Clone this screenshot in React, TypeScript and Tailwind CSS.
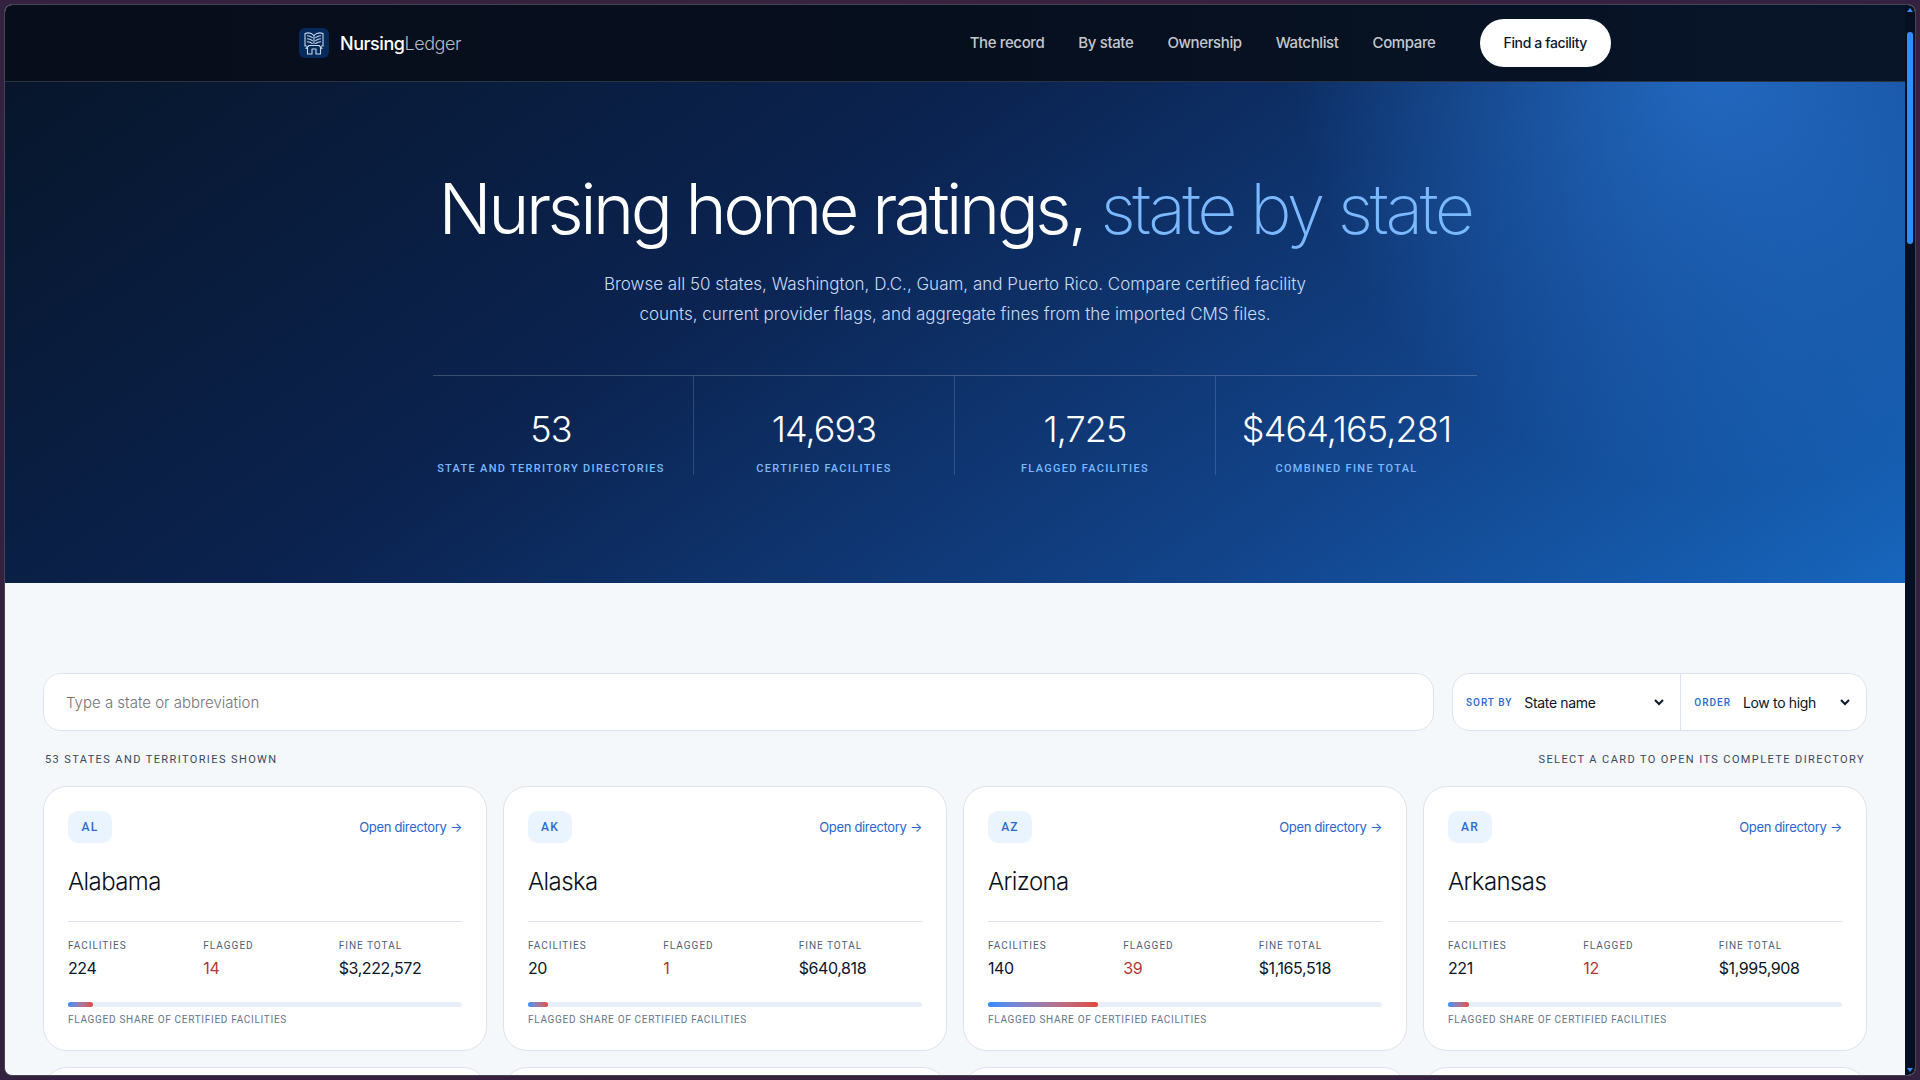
import React, { useState } from 'react';

interface StateRecord {
  code: string;
  name: string;
  facilities: number;
  flagged: number;
  fines: number;
}

const STATES: StateRecord[] = [
  { code: 'AL', name: 'Alabama', facilities: 224, flagged: 14, fines: 3222572 },
  { code: 'AK', name: 'Alaska', facilities: 20, flagged: 1, fines: 640818 },
  { code: 'AZ', name: 'Arizona', facilities: 140, flagged: 39, fines: 1165518 },
  { code: 'AR', name: 'Arkansas', facilities: 221, flagged: 12, fines: 1995908 },
];

const NAV_LINKS = ['The record', 'By state', 'Ownership', 'Watchlist', 'Compare'];

const STATS = [
  { value: '53', label: 'State and territory directories' },
  { value: '14,693', label: 'Certified facilities' },
  { value: '1,725', label: 'Flagged facilities' },
  { value: '$464,165,281', label: 'Combined fine total' },
];

// --- Subcomponents ---

const LogoMark: React.FC = () => (
  <span className="flex size-[30px] items-center justify-center rounded-md bg-[#062a5c]">
    <svg width="22" height="24" viewBox="0 0 22 24" fill="none" stroke="#c9d6e8" strokeWidth="1.1" strokeLinejoin="round" strokeLinecap="round" aria-hidden="true">
      <path d="M3.500 15H2V2.500C5 1.400 8.500 1.800 11 4.500C13.500 1.800 17 1.400 20 2.500V15H18.500" />
      <path d="M11 4.500V12.500" />
      <path d="M4.500 4.800C6.500 4.800 8 5.500 9.300 6.700M4.500 7.800C6.500 7.800 8 8.500 9.300 9.700M4.500 10.800C6.500 10.800 8 11.500 9.300 12.500" />
      <path d="M17.500 4.800C15.500 4.800 14 5.500 12.700 6.700M17.500 7.800C15.500 7.800 14 8.500 12.700 9.700M17.500 10.800C15.500 10.800 14 11.500 12.700 12.500" />
      <path d="M3 17.500L6 14.500H16L19 17.500M4.500 17V23H9V18H13V23H17.500V17" />
    </svg>
  </span>
);

const Header: React.FC = () => (
  <header className="border-b border-[#2c3340] bg-linear-to-r from-[#080d1b] via-[#060f1e] to-[#081529]">
    <div className="mx-auto flex h-[76px] max-w-[1312px] items-center justify-between">
      <a href="#home" className="flex items-center gap-[11px] text-lg leading-6 tracking-tight text-[#b4bac6]">
        <LogoMark />
        <span className="pt-0.5"><span className="font-medium text-white">Nursing</span><span className="font-light">Ledger</span></span>
      </a>
      <nav className="flex items-center gap-[34px] text-[15px] font-medium tracking-tight text-[#c3c8cf]">
        {NAV_LINKS.map((link) => (
          <a key={link} href="#section">{link}</a>
        ))}
        <a href="#find" className="ml-2.5 flex h-12 items-center rounded-full bg-white px-6 text-sm font-medium text-[#101828]">
          Find a facility
        </a>
      </nav>
    </div>
  </header>
);

const Hero: React.FC = () => (
  <section className="bg-[radial-gradient(ellipse_420px_430px_at_90%_-4%,rgba(48,140,245,0.56),transparent),linear-gradient(145deg,#07162b_0%,#0b2350_38%,#124389_72%,#1766bd_100%)] pt-[83px] pb-[108px] text-center">
    <h1 className="text-[70px] leading-[88px] font-light tracking-tighter text-white">
      Nursing home ratings, <span className="font-extralight text-[#7ab8ff]">state by state</span>
    </h1>
    <p className="mx-auto mt-4 max-w-[740px] text-[17px] leading-[30px] font-light text-[#c8dcf8]">
      Browse all 50 states, Washington, D.C., Guam, and Puerto Rico. Compare certified facility counts, current provider flags, and aggregate fines from the imported CMS files.
    </p>
    <dl className="mx-auto mt-[46px] grid max-w-[1044px] grid-cols-4 divide-x divide-white/15 border-t border-white/20">
      {STATS.map((stat) => (
        <div key={stat.label} className="flex flex-col-reverse pt-[33px] first:pr-6">
          <dt className="mt-[13px] font-[Roboto,sans-serif] text-[11px] leading-[13px] font-medium tracking-[1.3px] whitespace-nowrap text-[#7ab8ff] uppercase">{stat.label}</dt>
          <dd className="text-4xl font-light tracking-tight text-white">{stat.value}</dd>
        </div>
      ))}
    </dl>
  </section>
);

const StateCard: React.FC<{ state: StateRecord }> = ({ state }) => {
  // keep a visible sliver even for states with very few flags
  const share = Math.max(5, (state.flagged / state.facilities) * 100);
  const cells = [
    { label: 'Facilities', value: String(state.facilities), color: 'text-[#0b1528]' },
    { label: 'Flagged', value: String(state.flagged), color: 'text-[#b53632]' },
    { label: 'Fine total', value: `$${state.fines.toLocaleString('en-US')}`, color: 'text-[#0b1528]' },
  ];

  return (
    <article className="rounded-3xl border border-[#dde3ee] bg-white p-6">
      <div className="flex h-8 items-center justify-between">
        <span className="flex h-8 w-11 items-center justify-center rounded-[10px] bg-[#eaf4ff] font-[Roboto,sans-serif] text-xs font-medium tracking-widest text-[#2a6bd0]">{state.code}</span>
        <a href="#directory" className="pt-0.5 text-[13px] tracking-tight text-[#2a66cc]">Open directory →</a>
      </div>
      <h2 className="mt-[21px] text-2xl leading-9 font-light tracking-tight text-[#0b1020]">{state.name}</h2>
      <dl className="mt-[21px] grid grid-cols-3 gap-x-3 border-t border-[#dde1ef] pt-[18px]">
        {cells.map((cell) => (
          <div key={cell.label}>
            <dt className="font-[Roboto,sans-serif] text-[10px] leading-3 tracking-widest text-[#4f5f7a] uppercase">{cell.label}</dt>
            <dd className={`mt-1 text-base leading-6 tracking-tight ${cell.color}`}>{cell.value}</dd>
          </div>
        ))}
      </dl>
      <div className="mt-[22px] h-[5px] rounded-full bg-[#e8eff8]">
        <div className="h-full rounded-full bg-linear-to-r from-[#2b8cff] to-[#e2453c]" style={{ width: `${share}%` }} />
      </div>
      <p className="mt-[7px] font-[Roboto,sans-serif] text-[10px] leading-3 tracking-[0.7px] text-[#64748b] uppercase">Flagged share of certified facilities</p>
    </article>
  );
};

const Directory: React.FC = () => {
  const [query, setQuery] = useState('');
  const [sortBy, setSortBy] = useState('name');
  const [order, setOrder] = useState('asc');

  const visible = STATES.filter((s) =>
    s.name.toLowerCase().includes(query.toLowerCase()) || s.code.toLowerCase() === query.toLowerCase()
  );

  return (
    <section className="px-[38px] pt-[90px]">
      <div className="flex gap-[18px]">
        <input
          type="search"
          aria-label="Search states"
          placeholder="Type a state or abbreviation"
          value={query}
          onChange={(e) => setQuery(e.target.value)}
          className="h-[58px] min-w-0 flex-1 rounded-[18px] border border-[#dde3ee] bg-white px-[22px] text-[15px] font-light text-[#0b1528] placeholder:text-[#757575]"
        />
        <div className="flex h-[58px] divide-x divide-[#dde3ee] rounded-[18px] border border-[#dde3ee] bg-white">
          <div className="flex items-center gap-2 px-[13px]">
            <label htmlFor="sort" className="font-[Roboto,sans-serif] text-[10px] font-medium tracking-widest text-[#2a6bd0] uppercase">Sort by</label>
            <select id="sort" value={sortBy} onChange={(e) => setSortBy(e.target.value)} className="w-[147px] bg-white text-sm tracking-tight text-[#0b1528]">
              <option value="name">State name</option>
              <option value="facilities">Facilities</option>
              <option value="flagged">Flagged</option>
              <option value="fines">Fine total</option>
            </select>
          </div>
          <div className="flex items-center gap-2 px-[13px]">
            <label htmlFor="order" className="font-[Roboto,sans-serif] text-[10px] font-medium tracking-widest text-[#2a6bd0] uppercase">Order</label>
            <select id="order" value={order} onChange={(e) => setOrder(e.target.value)} className="w-[114px] bg-white text-sm tracking-tight text-[#0b1528]">
              <option value="asc">Low to high</option>
              <option value="desc">High to low</option>
            </select>
          </div>
        </div>
      </div>
      <div className="mt-[21px] flex justify-between px-0.5 font-[Roboto,sans-serif] text-[11px] leading-4 tracking-[1.4px] text-[#3a475c] uppercase">
        <p>53 states and territories shown</p>
        <p>Select a card to open its complete directory</p>
      </div>
      <div className="mt-[18px] grid grid-cols-4 gap-4">
        {visible.map((s) => <StateCard key={s.code} state={s} />)}
        {/* top edge of the following row */}
        {visible.map((s) => <div key={`${s.code}-next`} className="h-24 rounded-3xl border border-[#dde3ee] bg-white" />)}
      </div>
    </section>
  );
};

const ScrollRail: React.FC = () => (
  <div className="flex w-2.5 shrink-0 flex-col items-center justify-between bg-[#050f22] pt-[3px] pb-[3px]" aria-hidden="true">
    <div className="flex h-full flex-col items-center">
      <svg width="6" height="4" viewBox="0 0 6 4" fill="#2b90ff"><path d="M3 0L6 4H0Z" /></svg>
      <div className="mt-5 h-1/5 w-1.5 rounded-full bg-[#2b90ff]" />
    </div>
    <svg width="6" height="4" viewBox="0 0 6 4" fill="#2b90ff"><path d="M0 0H6L3 4Z" /></svg>
  </div>
);

// --- Main Component ---

export default function App() {
  return (
    <div className="h-screen overflow-hidden bg-linear-to-r from-[#33213f] via-[#38223f] to-[#33213f] p-1 font-[Inter,'Liberation_Sans',sans-serif]">
      <div className="flex h-full overflow-hidden rounded-lg border border-[#454550] bg-[#f4f8fb]">
        <div className="min-w-0 flex-1 overflow-hidden">
          <Header />
          <Hero />
          <Directory />
        </div>
        <ScrollRail />
      </div>
    </div>
  );
}
